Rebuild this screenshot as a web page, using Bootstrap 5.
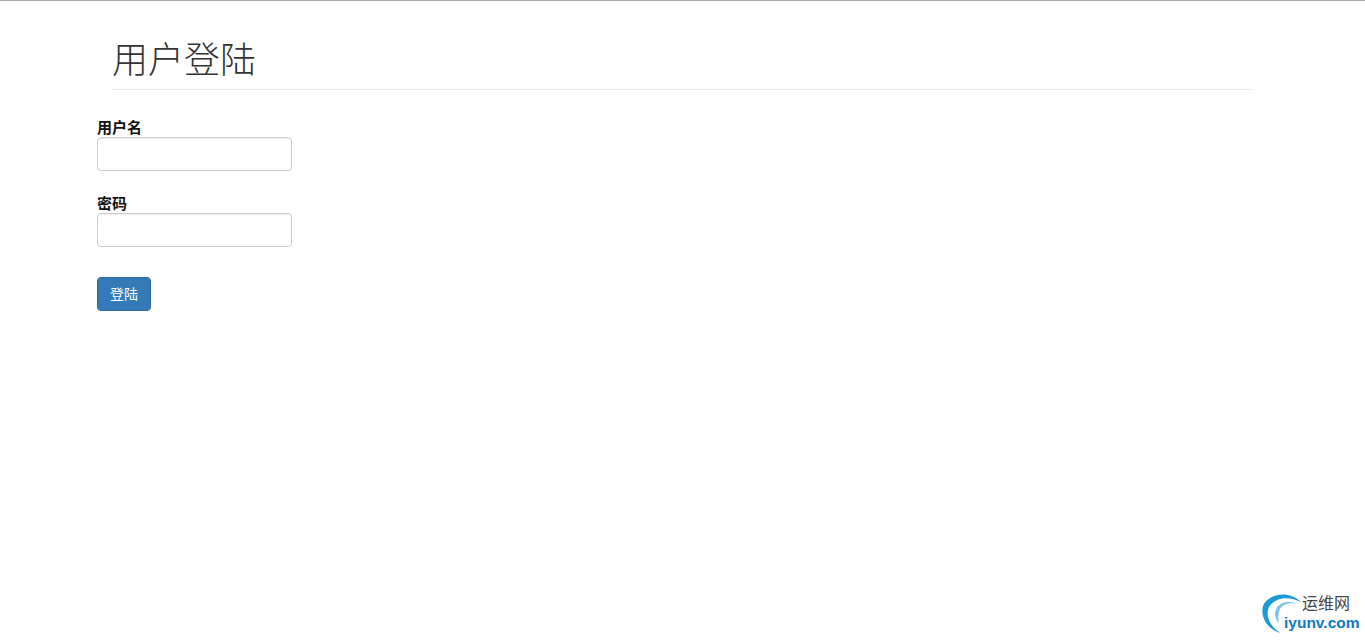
<!DOCTYPE html>
<html lang="zh-CN">
<head>
  <meta charset="UTF-8" />
  <meta name="viewport" content="width=device-width, initial-scale=1.0"/>
  <title>用户登陆</title>
  <link href="https://cdn.jsdelivr.net/npm/bootstrap@5.3.0/dist/css/bootstrap.min.css" rel="stylesheet"/>
  <style>
    body { background: #fff; color: #333; border-top: 1px solid #aaa; font-family: "Liberation Sans", "Noto Sans CJK SC", sans-serif; font-size: 14px; height: 640px; overflow: hidden; }
    .login-wrap { width: 1170px; margin-left: 97px; }
    .login-head { margin: 0 15px; height: 89px; padding-top: 37px; border-bottom: 1px solid #eee; }
    .login-head h1 { font-size: 36px; font-weight: 300; line-height: 46px; margin: 0; color: #333; }
    .login-form { padding-top: 27px; }
    .field-row { margin-bottom: 22px; }
    .field-label { display: block; font-weight: 700; font-size: 15px; line-height: 20px; margin-bottom: 0; padding-top: 1px; height: 20px; color: #111; }
    .field-input.form-control { width: 195px; height: 34px; padding: 6px 12px; font-size: 14px; border: 1px solid #ccc; border-radius: 4px; box-shadow: inset 0 1px 1px rgba(0,0,0,.075); }
    .login-btn.btn { width: 54px; height: 34px; padding: 6px 12px; margin-top: 8px; font-size: 14px; line-height: 20px; color: #fff; background: #337ab7; border: 1px solid #2e6da4; border-radius: 4px; }
    .site-mark { position: absolute; right: 4px; bottom: 4px; width: 100px; height: 44px; }
    .site-mark svg { position: absolute; left: 0; top: 0; }
    .mark-cn { position: absolute; left: 41px; top: 3px; font-size: 16px; line-height: 18px; color: #444; }
    .mark-en { position: absolute; left: 23px; top: 22px; font-size: 15.5px; line-height: 18px; font-weight: 700; color: #0f7ac0; }
  </style>
</head>
<body class="position-relative">
  <div class="login-wrap">
    <div class="login-head">
      <h1>用户登陆</h1>
    </div>
    <form class="login-form">
      <div class="field-row">
        <label class="field-label" for="username">用户名</label>
        <input type="text" class="form-control field-input" id="username"/>
      </div>
      <div class="field-row">
        <label class="field-label" for="password">密码</label>
        <input type="password" class="form-control field-input" id="password"/>
      </div>
      <button type="button" class="btn login-btn">登陆</button>
    </form>
  </div>

  <div class="site-mark">
    <svg width="44" height="44" viewBox="0 0 44 44" fill="none">
      <path d="M19 41C7 37 -1 26 2 14C6 3 26 -3 40 10C27 3 13 6 8 15C4 24 9 34 19 41Z" fill="#1b9ad6"/>
      <path d="M18 31C13 26 13 19 17 14C21 10 29 8 36 12C29 10 22 12 19 17C17 21 17 26 18 31Z" fill="#7cc6e8"/>
    </svg>
    <span class="mark-cn">运维网</span>
    <span class="mark-en">iyunv.com</span>
  </div>

<script src="https://cdn.jsdelivr.net/npm/bootstrap@5.3.0/dist/js/bootstrap.bundle.min.js"></script>
</body>
</html>
